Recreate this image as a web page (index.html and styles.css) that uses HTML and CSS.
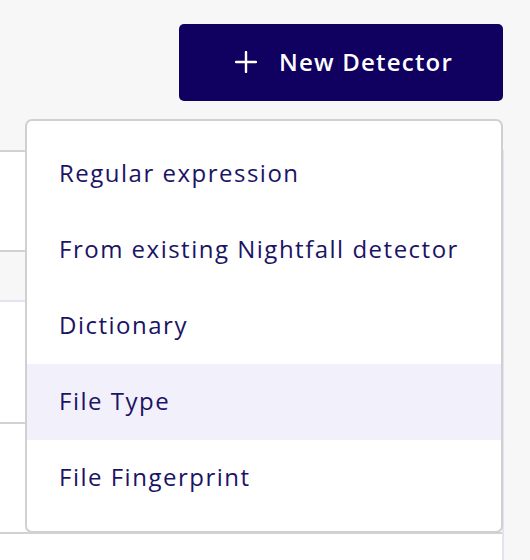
FILE: index.html
```html
<!DOCTYPE html>
<html>
<head>
<meta charset="utf-8">
<link rel="stylesheet" href="styles.css">
</head>
<body>
<div class="page">
  <div class="toolbar">
    <button class="new-btn">
      <svg class="plus" width="22" height="22" viewBox="0 0 22 22"><path d="M11 1v20M1 11h20" stroke="#fff" stroke-width="2.4" stroke-linecap="round"/></svg>
      <span>New Detector</span>
    </button>
  </div>
  <div class="table">
    <div class="row head"></div>
    <div class="row band"></div>
    <div class="row r1"></div>
    <div class="row r2"></div>
    <div class="row r3"></div>
  </div>
  <ul class="menu">
    <li class="item">Regular expression</li>
    <li class="item">From existing Nightfall detector</li>
    <li class="item">Dictionary</li>
    <li class="item active">File Type</li>
    <li class="item">File Fingerprint</li>
  </ul>
</div>
</body>
</html>
```

FILE: styles.css
```css
html, body {
  margin: 0;
  padding: 0;
  background: #f7f7f7;
  overflow: hidden;
}
.page {
  position: relative;
  width: 530px;
  height: 560px;
  font-family: "Open Sans", "Noto Sans", sans-serif;
}
.toolbar {
  display: flex;
  justify-content: flex-end;
  padding: 24px 27px 0 0;
  height: 77px;
}
.new-btn {
  width: 324px;
  height: 77px;
  background: #10005f;
  border: none;
  border-radius: 5px;
  color: #fff;
  display: flex;
  align-items: center;
  justify-content: center;
  gap: 22px;
  font-family: inherit;
  font-size: 24px;
  font-weight: 600;
  letter-spacing: 1.2px;
  padding: 0 0 2px 6px;
}
.plus { display: block; }
.table {
  margin-top: 49px;
  width: 502px;
  background: #fff;
  border-right: 2px solid #e4e2f3;
}
.row {
  border-top: 2px solid #d2d2d2;
}
.head { height: 98px; }
.band {
  height: 48px;
  background: #f7f7f7;
  border-bottom: 2px solid #e4e2f3;
}
.r1 { height: 120px; border-top: none; }
.r2 { height: 108px; }
.r3 { height: 40px; }
.menu {
  position: absolute;
  top: 119px;
  left: 25px;
  width: 474px;
  margin: 0;
  padding: 15px 0;
  list-style: none;
  background: #fff;
  border: 2px solid #d0d0d0;
  border-radius: 7px;
}
.item {
  height: 76px;
  box-sizing: border-box;
  display: flex;
  align-items: center;
  padding: 0 0 3px 32px;
  font-size: 24px;
  letter-spacing: 1.5px;
  color: #1b1464;
}
.item.active {
  background: #f2f0fa;
}
```
